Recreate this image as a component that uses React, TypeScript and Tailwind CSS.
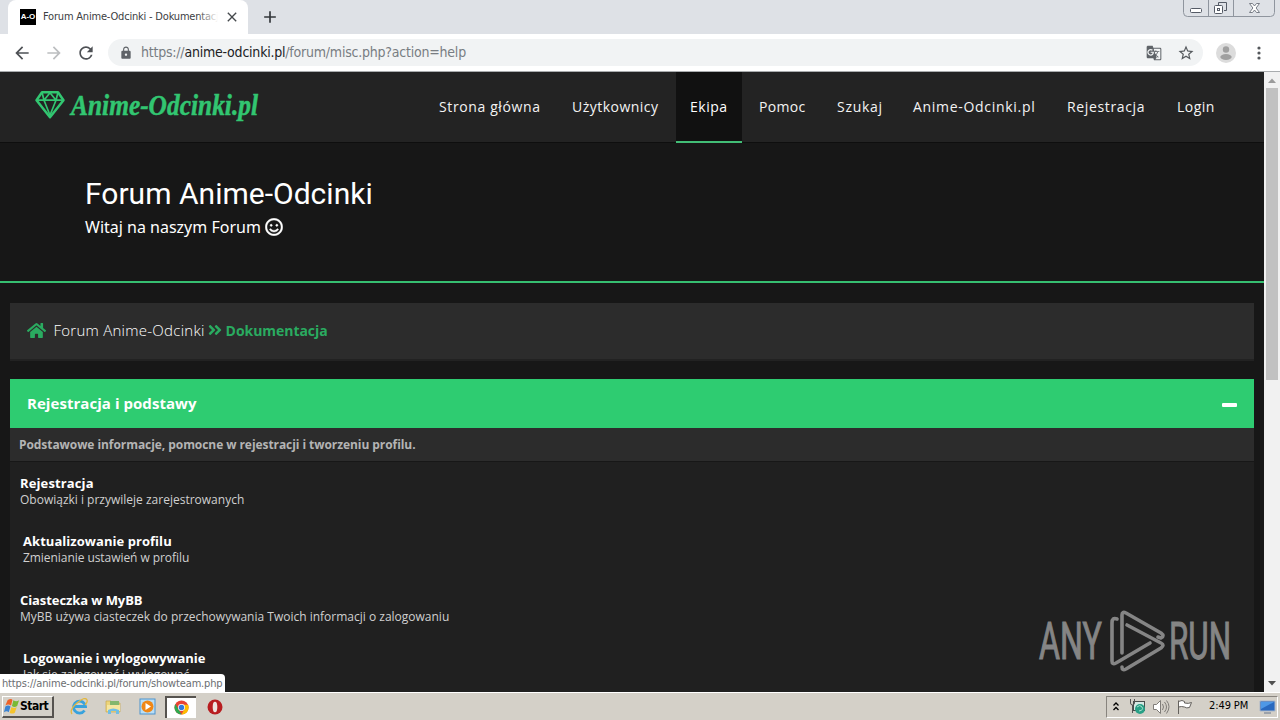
import type { ReactNode } from "react";
import { FaHome, FaAngleDoubleRight, FaRegSmile } from "react-icons/fa";
import {
  MdArrowBack,
  MdArrowForward,
  MdRefresh,
  MdLock,
  MdStarBorder,
  MdAdd,
  MdClose,
  MdGTranslate,
} from "react-icons/md";

type NavItem = {
  label: string;
  width: string;
  spacing: string;
  active?: boolean;
};

type Topic = {
  title: string;
  description: string;
  indent: string;
  titleSpacing: string;
  textSpacing: string;
};

const navItems: NavItem[] = [
  { label: "Strona główna", width: "w-[130px]", spacing: "tracking-[0.62px]" },
  { label: "Użytkownicy", width: "w-[115px]", spacing: "tracking-[0.48px]" },
  { label: "Ekipa", width: "w-[66px]", spacing: "tracking-[0.5px]", active: true },
  { label: "Pomoc", width: "w-[75px]", spacing: "tracking-[0.3px]" },
  { label: "Szukaj", width: "w-[73px]", spacing: "tracking-[0.7px]" },
  { label: "Anime-Odcinki.pl", width: "w-[151px]", spacing: "tracking-[0.7px]" },
  { label: "Rejestracja", width: "w-[107px]", spacing: "tracking-[0.65px]" },
  { label: "Login", width: "w-[66px]", spacing: "tracking-[0.5px]" },
];

const topics: Topic[] = [
  {
    title: "Rejestracja",
    description: "Obowiązki i przywileje zarejestrowanych",
    indent: "pl-[10px]",
    titleSpacing: "tracking-[0.13px]",
    textSpacing: "tracking-[0px]",
  },
  {
    title: "Aktualizowanie profilu",
    description: "Zmienianie ustawień w profilu",
    indent: "pl-[13px]",
    titleSpacing: "tracking-[0.05px]",
    textSpacing: "tracking-[-0.06px]",
  },
  {
    title: "Ciasteczka w MyBB",
    description: "MyBB używa ciasteczek do przechowywania Twoich informacji o zalogowaniu",
    indent: "pl-[10px]",
    titleSpacing: "tracking-[-0.08px]",
    textSpacing: "tracking-[0px]",
  },
  {
    title: "Logowanie i wylogowywanie",
    description: "Jak się zalogować i wylogować",
    indent: "pl-[13px]",
    titleSpacing: "tracking-[-0.08px]",
    textSpacing: "tracking-[0px]",
  },
];

const WindowButtons = () => (
  <svg className="absolute right-[4px] top-0" width="94" height="18" viewBox="0 0 94 18" fill="none">
    <path d="M1.500 0v12.500q0 4 4 4h83q4 0 4-4V0M26.500 0v16M51.500 0v16" stroke="#8f959e" />
    <rect x="8.500" y="8.500" width="11" height="4" rx="1" fill="#fff" stroke="#555b66" />
    <path d="M36.500 5V2.500h8v8H42" stroke="#555b66" />
    <rect x="32.500" y="5.500" width="8" height="8" rx="1" fill="#fff" stroke="#555b66" />
    <rect x="35.500" y="8.500" width="2" height="2" stroke="#555b66" />
    <path
      d="M67.500 3.500h3l2 2.500 2-2.500h3l-3.400 4.500 3.400 4.500h-3l-2-2.500-2 2.500h-3l3.400-4.500z"
      fill="#fff"
      stroke="#6b717b"
      strokeWidth=".9"
    />
  </svg>
);

const BrowserBar = () => (
  <div className="h-[72px] w-full shrink-0 border-b border-[#a9acae] bg-white">
    <div className="relative flex h-[34px] items-start bg-[#dee1e6] pl-2">
      <div className="flex h-[34px] w-[240px] items-center rounded-t-lg bg-white pl-3">
        <div className="flex h-4 w-4 shrink-0 items-center justify-center bg-black font-['Liberation_Sans',sans-serif] text-[8px] font-bold text-white">
          A-O
        </div>
        <div className="relative ml-[7px] w-[175px] overflow-hidden whitespace-nowrap font-['DejaVu_Sans_Condensed','DejaVu_Sans',sans-serif] text-[11px] tracking-[-0.2px] text-[#3c4043]">
          Forum Anime-Odcinki - Dokumentacja
          <div className="absolute inset-y-0 right-0 w-5 bg-gradient-to-r from-transparent to-white" />
        </div>
        <MdClose className="ml-[6px] h-4 w-4 shrink-0 text-[#45494d]" />
      </div>
      <MdAdd className="ml-[12px] mt-[7px] h-5 w-5 text-[#33373b]" />
      <WindowButtons />
    </div>
    <div className="flex h-[37px] items-center pl-[12px]">
      <MdArrowBack className="h-5 w-5 text-[#4e5155]" />
      <MdArrowForward className="ml-[12px] h-5 w-5 text-[#bcbec0]" />
      <MdRefresh className="ml-[12px] h-5 w-5 text-[#4e5155]" />
      <div className="ml-[12px] flex h-[27px] w-[1095px] items-center rounded-full bg-[#f1f3f4] pl-[11px]">
        <MdLock className="h-[14px] w-[14px] text-[#5f6368]" />
        <div className="ml-[8px] whitespace-nowrap font-['DejaVu_Sans_Condensed','DejaVu_Sans',sans-serif] text-[14px] tracking-[-0.22px] text-[#787d82]">
          https://<span className="text-[#202124]">anime-odcinki.pl</span>/forum/misc.php?action=help
        </div>
        <MdGTranslate className="ml-auto mr-[15px] h-4 w-4 text-[#5f6368]" />
        <MdStarBorder className="mr-[8px] h-[18px] w-[18px] text-[#55595d]" />
      </div>
      <svg className="ml-[13px]" width="20" height="20" viewBox="0 0 20 20">
        <circle cx="10" cy="10" r="10" fill="#dcdcdc" />
        <circle cx="10" cy="6.500" r="3.200" fill="#a0a0a0" />
        <ellipse cx="10" cy="14" rx="5.700" ry="2.900" fill="#a0a0a0" />
      </svg>
      <svg className="ml-[21px]" width="4" height="14" viewBox="0 0 4 14" fill="#54585c">
        <circle cx="2" cy="2" r="1.600" />
        <circle cx="2" cy="7" r="1.600" />
        <circle cx="2" cy="12" r="1.600" />
      </svg>
    </div>
  </div>
);

const Logo = () => (
  <svg className="ml-[34px] mt-[14px] shrink-0 overflow-visible" width="228" height="40" viewBox="0 0 228 40">
    <g fill="none" stroke="#32c671" strokeWidth="2.500" strokeLinejoin="round">
      <path d="M8 6.200h16l5.500 8L16 31.200 2.500 14.200z" />
      <path d="M2.500 14.200h27M10 14.200l6 15 6-15M8 6.200l2 8 6-7.500 6 7.500 2-8" strokeWidth="1.700" />
    </g>
    <text
      x="37"
      y="29"
      textLength="187"
      lengthAdjust="spacingAndGlyphs"
      fill="#32c671"
      stroke="#32c671"
      strokeWidth=".5"
      className="font-['Liberation_Serif',serif] text-[30px] font-bold italic"
    >
      Anime-Odcinki.pl
    </text>
  </svg>
);

const Header = () => (
  <header className="flex h-[71px] shrink-0 border-b border-[#0e0e0e] bg-[#232323]">
    <Logo />
    <nav className="ml-[163px] flex gap-[3px]">
      {navItems.map((item) => (
        <a
          key={item.label}
          className={`h-[71px] shrink-0 whitespace-nowrap pl-[14px] pt-[24px] text-[14px] leading-[22px] text-[#f3f3f3] ${item.width} ${item.spacing} ${
            item.active ? "border-b-2 border-[#42bd76] bg-[#111111] text-white" : ""
          }`}
        >
          {item.label}
        </a>
      ))}
    </nav>
  </header>
);

const ForumPage = () => (
  <main className="flex min-w-0 flex-1 flex-col overflow-hidden bg-[#171717] font-['Open_Sans',sans-serif]">
    <Header />
    <section className="h-[140px] shrink-0 border-b-2 border-[#36be70] pl-[85px] pt-[33px] text-white">
      <h1 className="font-['Roboto',sans-serif] text-[30px] leading-[36px] tracking-[0.02px]">Forum Anime-Odcinki</h1>
      <p className="mt-[4px] flex items-center gap-[4px] font-['Noto_Sans',sans-serif] text-[16px] leading-[22px]">
        Witaj na naszym Forum{" "}
        <FaRegSmile className="h-[18px] w-[18px] stroke-white" strokeWidth={12} />
      </p>
    </section>

    <div className="ml-[10px] mt-[20px] flex h-[58px] w-[1244px] shrink-0 items-center border-b-2 border-[#222222] bg-[#2c2c2c] pb-[2px] pl-[17px] text-[15px] text-white">
      <FaHome className="h-[19px] w-[19px] text-[#2aab60]" />
      <span className="ml-[7.500px] font-light tracking-[0.26px]">Forum Anime-Odcinki</span>
      <FaAngleDoubleRight className="ml-[3px] h-[16px] w-[14px] text-[#2aab60]" />
      <b className="ml-[4px] text-[14px] tracking-[-0.05px] text-[#2aab60]">Dokumentacja</b>
    </div>

    <section className="ml-[10px] mt-[18px] w-[1244px] shrink-0 bg-[#202020]">
      <div className="flex h-[49px] items-center bg-[#2ecc71] pl-[17px] pr-[17px] text-[15px] font-bold tracking-[0.05px] text-white">
        Rejestracja i podstawy
        <span className="ml-auto mt-[3px] h-[4px] w-[15px] rounded-[1px] bg-white" />
      </div>
      <div className="h-[34px] border-b border-[#171717] bg-[#2c2c2c] pl-[9px] pt-[8px] text-[12px] font-bold leading-[18px] tracking-[-0.065px] text-[#b4b4b4]">
        Podstawowe informacje, pomocne w rejestracji i tworzeniu profilu.
      </div>
      {topics.map((topic) => (
        <article key={topic.title} className={`h-[58.400px] pt-[13px] ${topic.indent}`}>
          <h2 className={`text-[13px] font-bold leading-[17px] text-white ${topic.titleSpacing}`}>{topic.title}</h2>
          <p className={`text-[12px] leading-[16px] text-[#d0d0d0] ${topic.textSpacing}`}>{topic.description}</p>
        </article>
      ))}
    </section>
  </main>
);

const Scrollbar = () => (
  <div className="flex w-4 shrink-0 flex-col items-center bg-[#f1f1f1]">
    <svg width="16" height="16" viewBox="0 0 16 16" fill="#9b9b9b">
      <path d="M4 11h8L8 6.500z" />
    </svg>
    <div className="h-[292px] w-[12px] bg-[#c1c1c1]" />
    <svg className="mt-auto" width="16" height="18" viewBox="0 0 16 18" fill="#505050">
      <path d="M4 7h8l-4 4.500z" />
    </svg>
  </div>
);

const AnyRunMark = () => (
  <svg className="absolute left-[1034px] top-[605px]" width="204" height="72" viewBox="0 0 204 72">
    <g fill="#858585" stroke="#858585" strokeWidth="1.100" className="font-['Roboto',sans-serif] text-[51px]">
      <text transform="translate(5 54) scale(.64 1)" textLength="98" lengthAdjust="spacingAndGlyphs">
        ANY
      </text>
      <text transform="translate(135 54) scale(.64 1)" textLength="97" lengthAdjust="spacingAndGlyphs">
        RUN
      </text>
    </g>
    <g fill="none" stroke="#858585" strokeWidth="3.600" strokeLinecap="round" strokeLinejoin="round">
      <path d="M83 14q-5-2-5 4v38q0 4 4 2l34-20" />
      <path d="M88 48V10q0-4 4-2l35 20q4 3 0 5l-3-1" />
      <path d="M93 20l34 18q4 2 0 5L92 64q-4 2-4-2" />
    </g>
  </svg>
);

const TaskIcon = ({ children }: { children: ReactNode }) => (
  <div className="flex h-[22px] w-[34px] items-center justify-center">{children}</div>
);

const Taskbar = () => (
  <footer className="flex h-[28px] shrink-0 items-center border-t border-white bg-[#d4d0c8] pl-[2px] font-['DejaVu_Sans_Condensed','DejaVu_Sans',sans-serif]">
    <div className="flex h-[22px] w-[52px] items-center border-b-2 border-r-2 border-[#56534f] border-l border-l-white border-t border-t-white text-[12px] font-bold tracking-[-0.5px] text-black">
      <svg className="shrink-0" width="17" height="17" viewBox="0 0 18 18">
        <path d="M5 2q4-2 5 0L8.500 8q-3-2-6 0z" fill="#ed6228" />
        <path d="M11 2.500q3 2 6 0l-2 6q-3 2-5.500 0z" fill="#79b936" />
        <path d="M2.500 9q3-2 5.500 0l-2 6q-2-2-5 0z" fill="#3b83d2" />
        <path d="M9 9.500q3 2 5.500 0l-2 6q-3 2-5.500 0z" fill="#f5c32c" />
      </svg>
      Start
    </div>
    <div className="ml-[8px] flex">
      <TaskIcon>
        <svg width="18" height="18" viewBox="0 0 18 18" fill="none">
          <path d="M14.500 12.500a6 6 0 1 1 1-4H5" stroke="#37a2dd" strokeWidth="2.800" />
          <path d="M2 16Q-1 12 7 5t10-3q1 2-2 5" stroke="#e3b83f" strokeWidth="1.300" />
        </svg>
      </TaskIcon>
      <TaskIcon>
        <svg width="17" height="17" viewBox="0 0 17 17">
          <path d="M1 3h5l1 2h8v9H1z" fill="#ecd57b" stroke="#c8aa4d" strokeWidth=".7" />
          <path d="M5 3h9v4H5z" fill="#83b66d" />
          <path d="M2 7h13v6H2z" fill="#f6e6a0" />
          <path d="M3 16v-4q5-3 11 0v4h-3v-3H6v3z" fill="#71bee4" />
        </svg>
      </TaskIcon>
      <TaskIcon>
        <svg width="17" height="17" viewBox="0 0 17 17">
          <rect x="1" y="1" width="15" height="15" fill="#b9def6" stroke="#4d93cd" />
          <circle cx="8.500" cy="8.500" r="6" fill="#f08716" />
          <path d="M6.500 5v7l5.500-3.500z" fill="#fff" />
        </svg>
      </TaskIcon>
      <div className="ml-[1px] flex h-[22px] w-[31px] items-center justify-center border-l-2 border-t-2 border-[#56534f] bg-white">
        <svg width="15" height="15" viewBox="0 0 16 16">
          <circle cx="8" cy="8" r="7.500" fill="#e94335" />
          <path d="M1.500 4.300 6 12l2 3.500A7.500 7.500 0 0 1 1.500 4.300" fill="#2da94f" />
          <path d="M8 5h7a7.500 7.500 0 0 1-7 10.500L11.500 9z" fill="#fdbd00" />
          <circle cx="8" cy="8" r="3.700" fill="#fff" />
          <circle cx="8" cy="8" r="2.900" fill="#3279dd" />
        </svg>
      </div>
      <div className="ml-[2px]">
        <TaskIcon>
          <svg width="16" height="16" viewBox="0 0 16 16">
            <circle cx="8" cy="8" r="7.500" fill="#b81d20" />
            <ellipse cx="8" cy="8" rx="2.300" ry="5.300" fill="#eee4df" />
          </svg>
        </TaskIcon>
      </div>
    </div>
    <div className="ml-auto mr-[2px] flex h-[22px] w-[172px] items-center border border-[#88847e] border-b-white border-r-white text-[11px] text-black">
      <svg className="ml-[5px]" width="8" height="12" viewBox="0 0 8 12" fill="none" stroke="#000" strokeWidth="1.300">
        <path d="m1.500 4.500 2.500-2.500 2.500 2.500M1.500 9l2.500-2.500 2.500 2.500" />
      </svg>
      <svg className="ml-[9px]" width="17" height="17" viewBox="0 0 17 17">
        <rect x="4.500" y="3.500" width="11" height="9" fill="#d5e9e4" stroke="#494d4d" />
        <path d="M1.500 1v4q0 2 2 2V15M5.500 1v4q0 2-2 2" fill="none" stroke="#555" />
        <circle cx="11" cy="11" r="5" fill="#28a086" />
        <path d="M8 9q3-3 5 0t-3 4" stroke="#a9e0cf" fill="none" />
      </svg>
      <svg className="ml-[6px]" width="18" height="16" viewBox="0 0 18 16" fill="none" stroke="#7f7c78">
        <path d="M1.500 5.500h3l4-4v13l-4-4h-3z" fill="#fff" />
        <path d="M10.500 5q2 3 0 6M12.500 3q4 5 0 10M14.500 1.500q5 6 0 13" />
      </svg>
      <svg className="ml-[6px]" width="18" height="16" viewBox="0 0 18 16" fill="#fff" stroke="#64615d">
        <path d="M2.500 15V1.500M2.500 2.500q4-2 6 0v1.500q4 1 7-.5l-2 5q-3 1-5-.5-3-1-6 0" />
      </svg>
      <span className="ml-[15px] whitespace-nowrap tracking-[-0.1px]">2:49 PM</span>
      <svg className="ml-auto mr-[1px]" width="17" height="16" viewBox="0 0 17 16">
        <path d="M1 2h15v10H1z" fill="#2969bf" stroke="#aab6c8" />
        <path d="M2 3h13L2 10z" fill="#4e98e6" />
        <path d="M5 14h7" stroke="#65758d" />
      </svg>
    </div>
  </footer>
);

const App = () => {
  return (
    <div className="relative flex h-[720px] w-[1280px] flex-col overflow-hidden">
      <BrowserBar />
      <div className="flex min-h-0 flex-1">
        <ForumPage />
        <Scrollbar />
      </div>
      <div className="absolute bottom-[28px] left-0 h-[18px] w-[225px] whitespace-nowrap rounded-tr-[4px] bg-white pl-[2px] pt-[1px] font-['DejaVu_Sans_Condensed','DejaVu_Sans',sans-serif] text-[11px] leading-[17px] tracking-[-0.15px] text-[#6b6e71]">
        https://anime-odcinki.pl/forum/showteam.php
      </div>
      <AnyRunMark />
      <Taskbar />
    </div>
  );
};

export default App;
